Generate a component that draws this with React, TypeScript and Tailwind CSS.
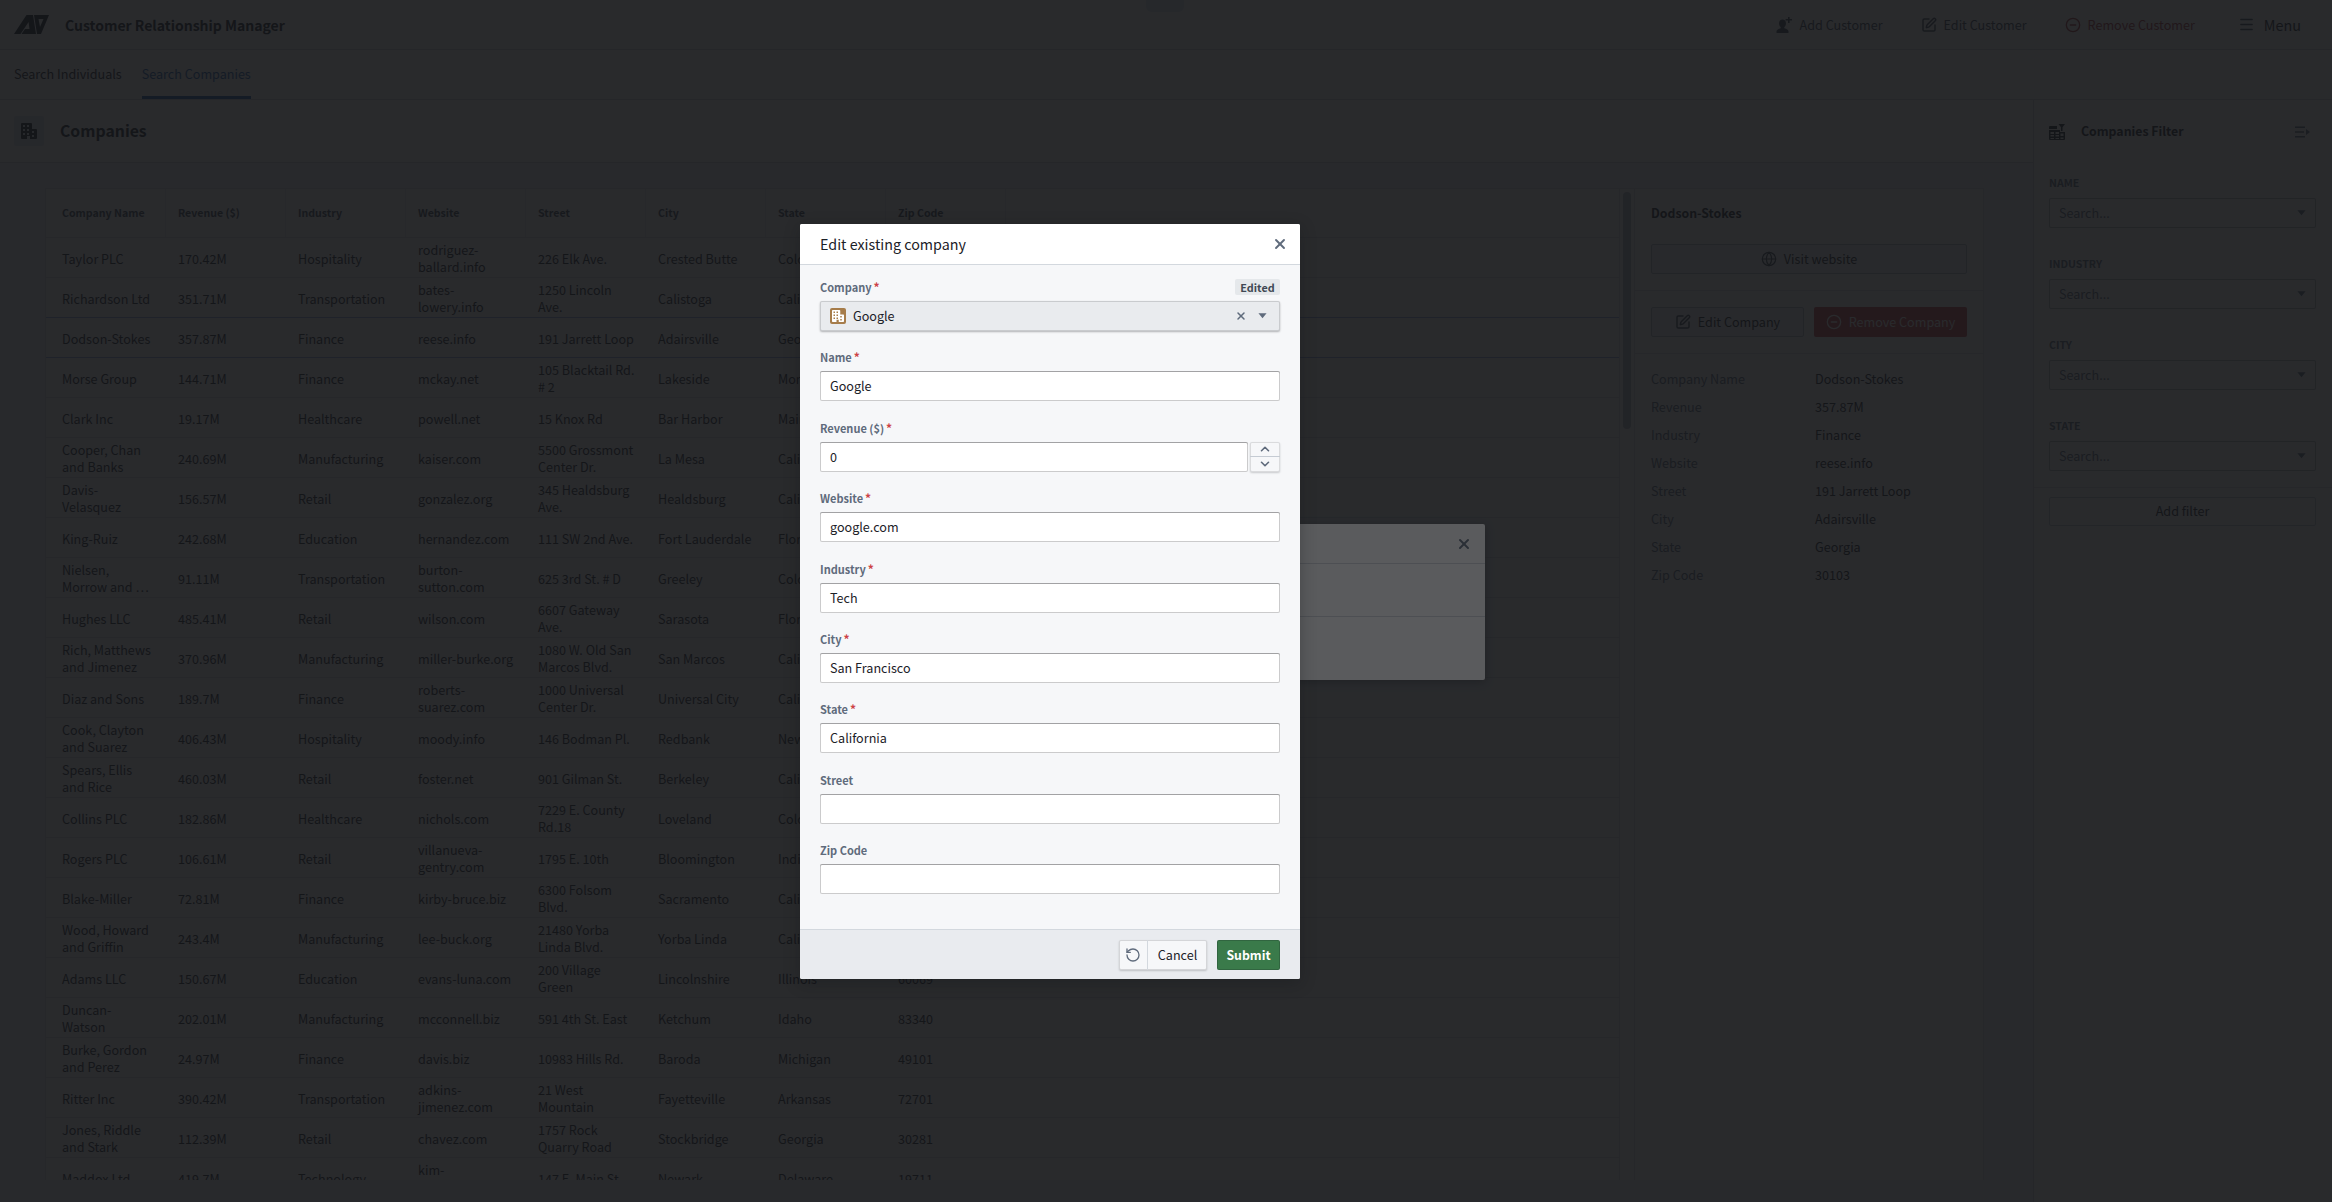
import React from "react";
import { ChevronDown, ChevronUp, CircleMinus, Globe, Menu, RotateCcw, SquarePen, X } from "lucide-react";

const rows: string[][] = [
  ["Taylor PLC", "170.42M", "Hospitality", "rodriguez-\nballard.info", "226 Elk Ave.", "Crested Butte", "Colorado", "81224"],
  ["Richardson Ltd", "351.71M", "Transportation", "bates-\nlowery.info", "1250 Lincoln\nAve.", "Calistoga", "California", "94515"],
  ["Dodson-Stokes", "357.87M", "Finance", "reese.info", "191 Jarrett Loop", "Adairsville", "Georgia", "30103"],
  ["Morse Group", "144.71M", "Finance", "mckay.net", "105 Blacktail Rd.\n# 2", "Lakeside", "Montana", "59922"],
  ["Clark Inc", "19.17M", "Healthcare", "powell.net", "15 Knox Rd", "Bar Harbor", "Maine", "04609"],
  ["Cooper, Chan\nand Banks", "240.69M", "Manufacturing", "kaiser.com", "5500 Grossmont\nCenter Dr.", "La Mesa", "California", "91942"],
  ["Davis-\nVelasquez", "156.57M", "Retail", "gonzalez.org", "345 Healdsburg\nAve.", "Healdsburg", "California", "95448"],
  ["King-Ruiz", "242.68M", "Education", "hernandez.com", "111 SW 2nd Ave.", "Fort Lauderdale", "Florida", "33301"],
  ["Nielsen,\nMorrow and …", "91.11M", "Transportation", "burton-\nsutton.com", "625 3rd St. # D", "Greeley", "Colorado", "80631"],
  ["Hughes LLC", "485.41M", "Retail", "wilson.com", "6607 Gateway\nAve.", "Sarasota", "Florida", "34231"],
  ["Rich, Matthews\nand Jimenez", "370.96M", "Manufacturing", "miller-burke.org", "1080 W. Old San\nMarcos Blvd.", "San Marcos", "California", "92078"],
  ["Diaz and Sons", "189.7M", "Finance", "roberts-\nsuarez.com", "1000 Universal\nCenter Dr.", "Universal City", "California", "91608"],
  ["Cook, Clayton\nand Suarez", "406.43M", "Hospitality", "moody.info", "146 Bodman Pl.", "Redbank", "New Jersey", "07701"],
  ["Spears, Ellis\nand Rice", "460.03M", "Retail", "foster.net", "901 Gilman St.", "Berkeley", "California", "94710"],
  ["Collins PLC", "182.86M", "Healthcare", "nichols.com", "7229 E. County\nRd.18", "Loveland", "Colorado", "80537"],
  ["Rogers PLC", "106.61M", "Retail", "villanueva-\ngentry.com", "1795 E. 10th", "Bloomington", "Indiana", "47408"],
  ["Blake-Miller", "72.81M", "Finance", "kirby-bruce.biz", "6300 Folsom\nBlvd.", "Sacramento", "California", "95819"],
  ["Wood, Howard\nand Griffin", "243.4M", "Manufacturing", "lee-buck.org", "21480 Yorba\nLinda Blvd.", "Yorba Linda", "California", "92887"],
  ["Adams LLC", "150.67M", "Education", "evans-luna.com", "200 Village\nGreen", "Lincolnshire", "Illinois", "60069"],
  ["Duncan-\nWatson", "202.01M", "Manufacturing", "mcconnell.biz", "591 4th St. East", "Ketchum", "Idaho", "83340"],
  ["Burke, Gordon\nand Perez", "24.97M", "Finance", "davis.biz", "10983 Hills Rd.", "Baroda", "Michigan", "49101"],
  ["Ritter Inc", "390.42M", "Transportation", "adkins-\njimenez.com", "21 West\nMountain", "Fayetteville", "Arkansas", "72701"],
  ["Jones, Riddle\nand Stark", "112.39M", "Retail", "chavez.com", "1757 Rock\nQuarry Road", "Stockbridge", "Georgia", "30281"],
  ["Maddox Ltd", "419.7M", "Technology", "kim-\nhowell.com", "147 E. Main St.", "Newark", "Delaware", "19711"],
];

const headers = ["Company Name", "Revenue ($)", "Industry", "Website", "Street", "City", "State", "Zip Code"];

const details = [
  ["Company Name", "Dodson-Stokes"],
  ["Revenue", "357.87M"],
  ["Industry", "Finance"],
  ["Website", "reese.info"],
  ["Street", "191 Jarrett Loop"],
  ["City", "Adairsville"],
  ["State", "Georgia"],
  ["Zip Code", "30103"],
];

function Office({ className }: { className?: string }) {
  return (
    <svg viewBox="0 0 16 16" className={className} fill="currentColor">
      <path
        fillRule="evenodd"
        d="M1 0h9a1 1 0 0 1 1 1v5h4a1 1 0 0 1 1 1v8a1 1 0 0 1-1 1H9v-3H6v3H1a1 1 0 0 1-1-1V1a1 1 0 0 1 1-1zM2 2v2h2V2zM6 2v2h2V2zM2 6v2h2V6zM6 6v2h2V6zM2 10v2h2v-2zM6 10v2h2v-2zM11 8v2h2V8zM11 12v2h2v-2z"
      />
    </svg>
  );
}

function NewPerson({ className }: { className?: string }) {
  return (
    <svg viewBox="0 0 16 16" className={className} fill="currentColor">
      <path d="M12 0h1.600v2H16v1.600h-2.400V6H12V3.600H9.600V2H12z" />
      <path d="M6.500 2.500C8.600 2.500 10 4.200 10 6.400c0 1.500-.7 2.900-1.700 3.600v1.300c2.300.6 4.200 1.600 4.200 3.200V16H.5v-1.500c0-1.600 1.900-2.600 4.200-3.200V10C3.700 9.300 3 7.900 3 6.400c0-2.200 1.400-3.900 3.500-3.900z" />
    </svg>
  );
}

function TableFilter({ className }: { className?: string }) {
  return (
    <svg viewBox="0 0 16 16" className={className} fill="currentColor">
      <path d="M1 2h7v3H0V3a1 1 0 0 1 1-1z" />
      <path d="M9.500 0H16l-2.500 3.200V7h-1.500V3.200z" />
      <path fillRule="evenodd" d="M0 6h11v2h5v7a1 1 0 0 1-1 1H1a1 1 0 0 1-1-1zM1.500 8v2H5V8zM6.500 8v2H10V8zM1.500 11v1.500H5V11zM6.500 11v1.500H10V11zM11.500 9.500V12H14.500V9.500zM1.500 14v1H5v-1zM6.500 14v1H10v-1zM11.500 13.500V15H14.500V13.500z" />
    </svg>
  );
}

function MenuClosed({ className }: { className?: string }) {
  return (
    <svg viewBox="0 0 16 16" className={className} fill="currentColor">
      <path d="M1 2.500h10v1.500H1zM1 7.200h9v1.500H1zM1 12h10v1.500H1z" />
      <path d="M12 5l4 3-4 3z" />
    </svg>
  );
}

function Caret({ className }: { className?: string }) {
  return (
    <svg viewBox="0 0 10 6" className={className} fill="currentColor">
      <path d="M.5 0h9L5 5.500z" />
    </svg>
  );
}

function Logo() {
  return (
    <svg viewBox="0 0 35 19" className="h-[19px] w-[35px] text-[#1c2127]" fill="currentColor">
      <path fillRule="evenodd" d="M0 19 12.500 0H19L22 19H7.500L11 14H15.500L14.600 7 6.500 19z" />
      <path fillRule="evenodd" d="M20 0H35L27 19H23zM24.500 4 26 12 29.500 4z" />
    </svg>
  );
}

function Field({ label, required, children, right }: { label: string; required?: boolean; children: React.ReactNode; right?: React.ReactNode }) {
  return (
    <div className="h-[70.4px]">
      <div className="mb-[5px] flex h-[18px] items-center justify-between">
        <div className="text-[11px] font-semibold leading-[18px] text-[#5f6b7c]">
          {label}
          <span className={required ? "ml-[2px] text-[12px] text-[#cd4246]" : "hidden"}>*</span>
        </div>
        {right}
      </div>
      {children}
    </div>
  );
}

const inputCls =
  "h-[30px] w-full rounded-[2px] bg-white px-[10px] text-[12.6px] leading-[29px] text-[#1c2127] shadow-[inset_0_0_0_1px_rgba(17,20,24,0.22),inset_0_1px_0_rgba(17,20,24,0.22)]";

function TextInput({ value }: { value?: string }) {
  return <div className={inputCls}>{value}</div>;
}

function FilterField({ label }: { label: string }) {
  return (
    <div className="h-[81px]">
      <div className="mb-[6px] h-[18px] text-[10.6px] font-semibold leading-[18px] text-[#5f6b7c]">{label}</div>
      <div className="flex h-[30px] items-center justify-between rounded-[2px] bg-white pl-[10px] pr-[10px] text-[12.6px] text-[#5f6b7c] shadow-[inset_0_0_0_1px_rgba(17,20,24,0.3)]">
        <span>Search...</span>
        <Caret className="h-[6px] w-[9px] text-[#5f6b7c]" />
      </div>
    </div>
  );
}

export default function App() {
  return (
    <div
      className="relative h-[1202px] w-[2332px] overflow-hidden bg-[#f6f7f9] text-[#1c2127]"
      style={{ fontFamily: '"Noto Sans CJK SC", "Noto Sans", sans-serif' }}
    >
      <header className="flex h-[50px] items-center border-b border-[#d3d8de] bg-white pl-[14px] pr-[31px]">
        <Logo />
        <div className="ml-[16px] text-[14px] font-semibold leading-[20px]">Customer Relationship Manager</div>
        <div className="ml-auto flex items-center text-[12.6px] leading-[20px] text-[#404854]">
          <NewPerson className="h-[16px] w-[16px]" />
          <span className="ml-[8px]">Add Customer</span>
          <SquarePen className="ml-[38px] h-[16px] w-[16px]" strokeWidth={2.2} />
          <span className="ml-[7px]">Edit Customer</span>
          <CircleMinus className="ml-[38px] h-[16px] w-[16px] text-[#ac2f33]" strokeWidth={2} />
          <span className="ml-[7px] text-[#ac2f33]">Remove Customer</span>
          <Menu className="ml-[43px] h-[17px] w-[17px]" strokeWidth={2} />
          <span className="ml-[9px] text-[14.4px] text-[#1c2127]">Menu</span>
        </div>
      </header>

      <nav className="flex h-[50px] items-stretch border-b border-[#d3d8de] bg-white pl-[14px] text-[12.6px]">
        <div className="flex items-center">Search Individuals</div>
        <div className="relative ml-[20px] flex items-center text-[#215db0]">
          Search Companies
          <div className="absolute bottom-0 left-0 right-0 h-[3px] bg-[#215db0]" />
        </div>
      </nav>

      <div className="flex h-[1102px]">
        <main className="w-[2033px] shrink-0">
          <div className="flex h-[63px] items-center border-b border-[#d3d8de] bg-white pl-[14px]">
            <div className="flex h-[30px] w-[30px] items-center justify-center rounded-[2px] bg-[#e5e8eb]">
              <Office className="h-[16px] w-[16px] text-[#1c2127]" />
            </div>
            <div className="ml-[16px] text-[15.8px] font-semibold leading-[24px]">Companies</div>
          </div>

          <div className="pl-[45px] pt-[25px]">
            <div className="flex h-[992px] w-[1939px] overflow-hidden border-l border-r border-t border-[#dde0e5] bg-white">
              <div className="w-[1574px] shrink-0 border-r border-[#dde0e5]">
                <div className="flex h-[49px] border-b border-[#dde0e5]">
                  {headers.map((h, i) => (
                    <div
                      key={h}
                      className={
                        i === 0
                          ? "flex w-[120px] items-center border-r border-[#ebedf0] pl-[16px] text-[10.6px] font-semibold text-[#404854]"
                          : "flex w-[120px] items-center border-r border-[#ebedf0] pl-[12px] text-[10.6px] font-semibold text-[#404854]"
                      }
                    >
                      {h}
                    </div>
                  ))}
                </div>
                {rows.map((r, ri) => (
                  <div
                    key={r[0]}
                    className={
                      ri === 1 || ri === 2
                        ? "flex h-[40px] border-b border-[#8fabe4]"
                        : "flex h-[40px] border-b border-[#dde0e5]"
                    }
                  >
                    {r.map((c, i) => (
                      <div
                        key={i}
                        className={
                          i === 0
                            ? "flex w-[120px] items-center whitespace-pre pl-[16px] pt-[1px] text-[12.6px] leading-[17px]"
                            : "flex w-[120px] items-center whitespace-pre pl-[12px] pt-[1px] text-[12.6px] leading-[17px]"
                        }
                      >
                        {c}
                      </div>
                    ))}
                  </div>
                ))}
              </div>

              <div className="w-[14px] shrink-0 pl-[3px] pt-[3px]">
                <div className="h-[237px] w-[8px] rounded-[4px] bg-[#b8bcc3]" />
              </div>

              <aside className="flex-1 border-l border-[#dde0e5]">
                <div className="h-[102px] border-b border-[#dde0e5] px-[16px]">
                  <div className="flex h-[49px] items-center text-[12.3px] font-semibold">Dodson-Stokes</div>
                  <div className="mt-[6px] flex h-[30px] items-center justify-center gap-[7px] rounded-[2px] border border-[#b9bdc3] bg-[#f6f7f9] text-[12.6px]">
                    <Globe className="h-[16px] w-[16px] text-[#404854]" strokeWidth={1.8} />
                    Visit website
                  </div>
                </div>
                <div className="flex h-[63px] items-center justify-between border-b border-[#dde0e5] px-[16px]">
                  <div className="flex h-[30px] w-[153px] items-center justify-center gap-[7px] rounded-[2px] border border-[#b9bdc3] bg-[#f6f7f9] text-[12.6px]">
                    <SquarePen className="h-[16px] w-[16px] text-[#404854]" strokeWidth={2.2} />
                    Edit Company
                  </div>
                  <div className="flex h-[30px] w-[153px] items-center justify-center gap-[7px] rounded-[2px] bg-[#cd4246] text-[12.6px] text-white">
                    <CircleMinus className="h-[16px] w-[16px]" strokeWidth={2} />
                    Remove Company
                  </div>
                </div>
                <div className="px-[16px] pt-[11px]">
                  {details.map(([k, v]) => (
                    <div key={k} className="flex h-[28px] items-center text-[12.6px]">
                      <div className="w-[164px] text-[#5f6b7c]">{k}</div>
                      <div>{v}</div>
                    </div>
                  ))}
                </div>
              </aside>
            </div>
          </div>
        </main>

        <aside className="flex-1 border-l border-[#d3d8de] bg-white">
          <div className="flex h-[63px] items-center pl-[15px] pr-[22px]">
            <TableFilter className="h-[16px] w-[16px] text-[#1c2127]" />
            <div className="ml-[16px] text-[12.3px] font-semibold">Companies Filter</div>
            <MenuClosed className="ml-auto h-[16px] w-[16px] text-[#5f6b7c]" />
          </div>
          <div className="px-[15px] pr-[16px] pt-[11px]">
            <FilterField label="NAME" />
            <FilterField label="INDUSTRY" />
            <FilterField label="CITY" />
            <FilterField label="STATE" />
          </div>
          <div className="mt-[-11px] border-t border-[#dde0e5] px-[15px] pr-[16px] pt-[9px]">
            <div className="flex h-[29px] items-center justify-center rounded-[2px] border border-[#c5c9ce] text-[12.6px]">Add filter</div>
          </div>
        </aside>
      </div>

      <div className="absolute left-[1146px] top-0 h-[12px] w-[38px] rounded-b-[6px] bg-[#e5e8eb]" />

      {/* first backdrop and the dialog beneath */}
      <div className="absolute inset-0 bg-[rgba(20,21,24,0.7)]" />
      <div className="absolute left-[847px] top-[524px] h-[156px] w-[638px] rounded-[2px] bg-white shadow-[0_2px_8px_rgba(17,20,24,0.4)]">
        <div className="flex h-[40px] items-center justify-end border-b border-[#d3d8de] pr-[13px]">
          <X className="h-[16px] w-[16px] text-[#5f6b7c]" strokeWidth={3} />
        </div>
        <div className="h-[53px] border-b border-[#d3d8de]" />
      </div>

      {/* second backdrop and the active dialog */}
      <div className="absolute inset-0 bg-[rgba(20,21,24,0.7)]" />
      <div className="absolute left-[800px] top-[224px] flex h-[755px] w-[500px] flex-col overflow-hidden rounded-[2px] bg-[#f6f7f9] shadow-[0_4px_16px_rgba(17,20,24,0.3)]">
        <div className="flex h-[41px] shrink-0 items-center justify-between border-b border-[#d3d8de] bg-white pl-[20px] pr-[12px]">
          <div className="text-[14.3px] leading-[20px]">Edit existing company</div>
          <X className="h-[16px] w-[16px] text-[#5f6b7c]" strokeWidth={2.8} />
        </div>
        <div className="flex-1 px-[20px] pt-[13px]">
          <Field
            label="Company"
            required
            right={
              <span className="flex h-[16px] w-[45px] items-center justify-center rounded-[2px] bg-[#e5e8eb] text-[10.8px] font-semibold text-[#404854]">
                Edited
              </span>
            }
          >
            <div className="flex h-[30px] items-center rounded-[2px] bg-[#e9ebee] pl-[10px] pr-[8px] text-[12.6px] shadow-[inset_0_0_0_1px_rgba(17,20,24,0.15),0_1px_2px_rgba(17,20,24,0.3)]">
              <div className="flex h-[16px] w-[16px] items-center justify-center rounded-[2px] bg-[#a67c4a]">
                <Office className="h-[12px] w-[12px] text-white" />
              </div>
              <span className="ml-[7px]">Google</span>
              <X className="ml-auto h-[12px] w-[12px] text-[#5f6b7c]" strokeWidth={3} />
              <Caret className="ml-[11px] mr-[5px] h-[6px] w-[9px] text-[#5f6b7c]" />
            </div>
          </Field>
          <Field label="Name" required>
            <TextInput value="Google" />
          </Field>
          <Field label="Revenue ($)" required>
            <div className="flex gap-[2px]">
              <div className={inputCls + " flex-1"}>0</div>
              <div className="flex h-[30px] w-[30px] shrink-0 flex-col overflow-hidden rounded-[2px] bg-[#f6f7f9] shadow-[0_0_0_1px_rgba(17,20,24,0.12)_inset,0_1px_2px_rgba(17,20,24,0.2)]">
                <div className="flex h-[15px] items-center justify-center border-b border-[#c5cbd3]">
                  <ChevronUp className="h-[14px] w-[14px] text-[#5f6b7c]" strokeWidth={2.8} />
                </div>
                <div className="flex h-[15px] items-center justify-center">
                  <ChevronDown className="h-[14px] w-[14px] text-[#5f6b7c]" strokeWidth={2.8} />
                </div>
              </div>
            </div>
          </Field>
          <Field label="Website" required>
            <TextInput value="google.com" />
          </Field>
          <Field label="Industry" required>
            <TextInput value="Tech" />
          </Field>
          <Field label="City" required>
            <TextInput value="San Francisco" />
          </Field>
          <Field label="State" required>
            <TextInput value="California" />
          </Field>
          <Field label="Street">
            <TextInput />
          </Field>
          <Field label="Zip Code">
            <TextInput />
          </Field>
        </div>
        <div className="flex h-[50px] shrink-0 items-center justify-end border-t border-[#d3d8de] bg-[#e9ebef] pr-[20px] pt-[1px]">
          <div className="flex h-[30px] overflow-hidden rounded-[2px] bg-[#f6f7f9] shadow-[inset_0_0_0_1px_rgba(17,20,24,0.15),0_1px_2px_rgba(17,20,24,0.2)]">
            <div className="flex w-[29px] items-center justify-center border-r border-[#d3d8de]">
              <RotateCcw className="h-[16px] w-[16px] text-[#5f6b7c]" strokeWidth={2} />
            </div>
            <div className="flex w-[59px] items-center justify-center text-[12.6px]">Cancel</div>
          </div>
          <div className="ml-[10px] flex h-[30px] w-[63px] items-center justify-center rounded-[2px] bg-[#3a7a4a] text-[12.3px] font-semibold text-white shadow-[inset_0_0_0_1px_rgba(17,20,24,0.2)]">
            Submit
          </div>
        </div>
      </div>
    </div>
  );
}
